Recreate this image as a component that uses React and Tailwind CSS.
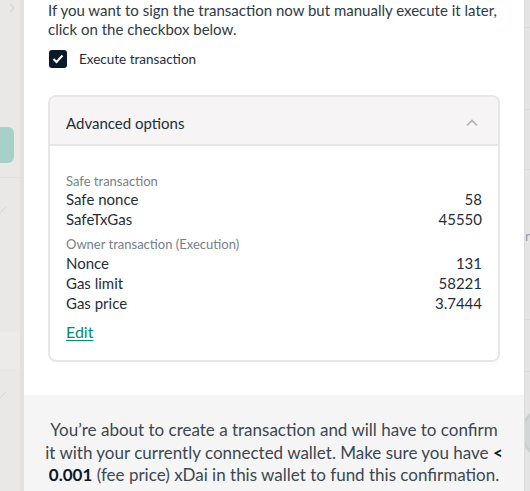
import { useState } from "react";

const font = { fontFamily: "Lato, 'Noto Sans', sans-serif" };

function Row({ label, value }) {
  return (
    <div className="flex justify-between text-[15px] leading-[20px] text-[#1f2d3a]">
      <span>{label}</span>
      <span>{value}</span>
    </div>
  );
}

function Tick() {
  return (
    <svg width="8" height="8" viewBox="0 0 8 8">
      <path d="M0 7l6-6" fill="none" stroke="#d6d6d6" strokeWidth="1" />
    </svg>
  );
}

export default function App() {
  const [execute, setExecute] = useState(true);
  const [open, setOpen] = useState(true);

  return (
    <div className="flex w-[530px] h-[491px] overflow-hidden bg-[#e8e7e6]" style={font}>
      {/* dimmed page behind the modal */}
      <div className="w-[24px] shrink-0 flex flex-col bg-[#e9e8e7] border-r-4 border-[#e2e1e0]">
        <div className="h-[127px] pt-[3px] pl-[8px]">
          <svg width="8" height="10" viewBox="0 0 8 10">
            <path d="M2 1l4 4-4 4" fill="none" stroke="#d2d2d2" strokeWidth="1.2" />
          </svg>
        </div>
        <div className="w-[14px] h-[36px] rounded-r-[6px] bg-[#a7d1c7]" />
        <div className="h-[15px] border-b border-[#e2e1e0]" />
        <div className="h-[36px] flex items-end">
          <Tick />
        </div>
        <div className="h-[118px]" />
        <div className="h-[37px] bg-[#ecebea]" />
        <div className="h-[30px] flex items-end">
          <Tick />
        </div>
      </div>

      {/* modal */}
      <div className="w-[500px] shrink-0 bg-white flex flex-col">
        <div className="px-6">
          <p className="text-[15px] leading-[19px] text-[#2e3a46] pt-px">
            If you want to sign the transaction now but manually execute it later,
            <br />
            click on the checkbox below.
          </p>

          <label className="flex items-center gap-[12px] mt-[10px] ml-px cursor-pointer">
            <button
              type="button"
              onClick={() => setExecute(!execute)}
              className={`w-[18px] h-[18px] rounded-[3px] flex items-center justify-center ${
                execute ? "bg-[#0b1a2a]" : "border-2 border-[#0b1a2a] bg-white"
              }`}
            >
              {execute && (
                <svg width="12" height="10" viewBox="0 0 12 10">
                  <path d="M1.5 5l3 3 6-6.5" fill="none" stroke="white" strokeWidth="2" />
                </svg>
              )}
            </button>
            <span className="text-[13.5px] text-[#1f2d3a]">Execute transaction</span>
          </label>

          <div className="mt-[26px] border-2 border-[#e8e7e6] rounded-[8px] overflow-hidden">
            <button
              type="button"
              onClick={() => setOpen(!open)}
              className="w-full h-[49px] pt-[5px] flex items-center justify-between pl-[16px] pr-[20px] bg-[#f6f4f4] border-b-2 border-[#e8e7e6]"
            >
              <span className="text-[15px] text-[#1f2d3a]">Advanced options</span>
              <svg width="12" height="8" viewBox="0 0 12 8">
                <path
                  d={open ? "M1 6.5l5-5 5 5" : "M1 1.5l5 5 5-5"}
                  fill="none"
                  stroke="#b3b3b3"
                  strokeWidth="1.6"
                />
              </svg>
            </button>
            {open && (
              <div className="bg-white pl-[16px] pr-[16px] pt-[27px] pb-[16px]">
                <div className="text-[13px] leading-[16px] text-[#76808a]">Safe transaction</div>
                <Row label="Safe nonce" value="58" />
                <Row label="SafeTxGas" value="45550" />
                <div className="text-[13px] leading-[17px] text-[#76808a] mt-[7px]">
                  Owner transaction (Execution)
                </div>
                <Row label="Nonce" value="131" />
                <Row label="Gas limit" value="58221" />
                <Row label="Gas price" value="3.7444" />
                <a href="#" className="inline-block mt-[9px] text-[16px] leading-[20px] text-[#008c73] underline decoration-1 underline-offset-2">
                  Edit
                </a>
              </div>
            )}
          </div>
        </div>

        <div className="mt-[33px] flex-1 bg-[#f6f5f5] px-[16px] pt-[24px]">
          <p className="text-[17px] leading-[22.5px] text-[#3b4752] text-center whitespace-nowrap">
            You’re about to create a transaction and will have to confirm
            <br />
            it with your currently connected wallet. Make sure you have <b className="text-[#0b1a2a]">&lt;</b>
            <br />
            <b className="text-[#0b1a2a]">0.001</b> (fee price) xDai in this wallet to fund this confirmation.
          </p>
        </div>
      </div>

      {/* page edge on the right */}
      <div className="flex-1 flex flex-col bg-[#e4e4e4] border-l border-[#dcdcdc] overflow-hidden">
        <div className="h-[28px] border-b border-[#dadada]" />
        <div className="h-[82px] border-b border-[#dadada]" />
        <div className="h-[60px] border-b border-[#dadada]" />
        <div className="h-[150px] pt-[58px] text-[14px] leading-[16px] text-[#9a9ab8] border-b border-[#dadada] overflow-hidden">
          n
        </div>
        <div className="h-[52px] border-b border-[#dadada]" />
        <div className="pt-[37px]">
          <div className="w-[44px] h-[48px] -ml-[4px] rounded-full border-[3px] border-[#c9cfcf] bg-[#d2d6d6]" />
        </div>
      </div>
    </div>
  );
}
